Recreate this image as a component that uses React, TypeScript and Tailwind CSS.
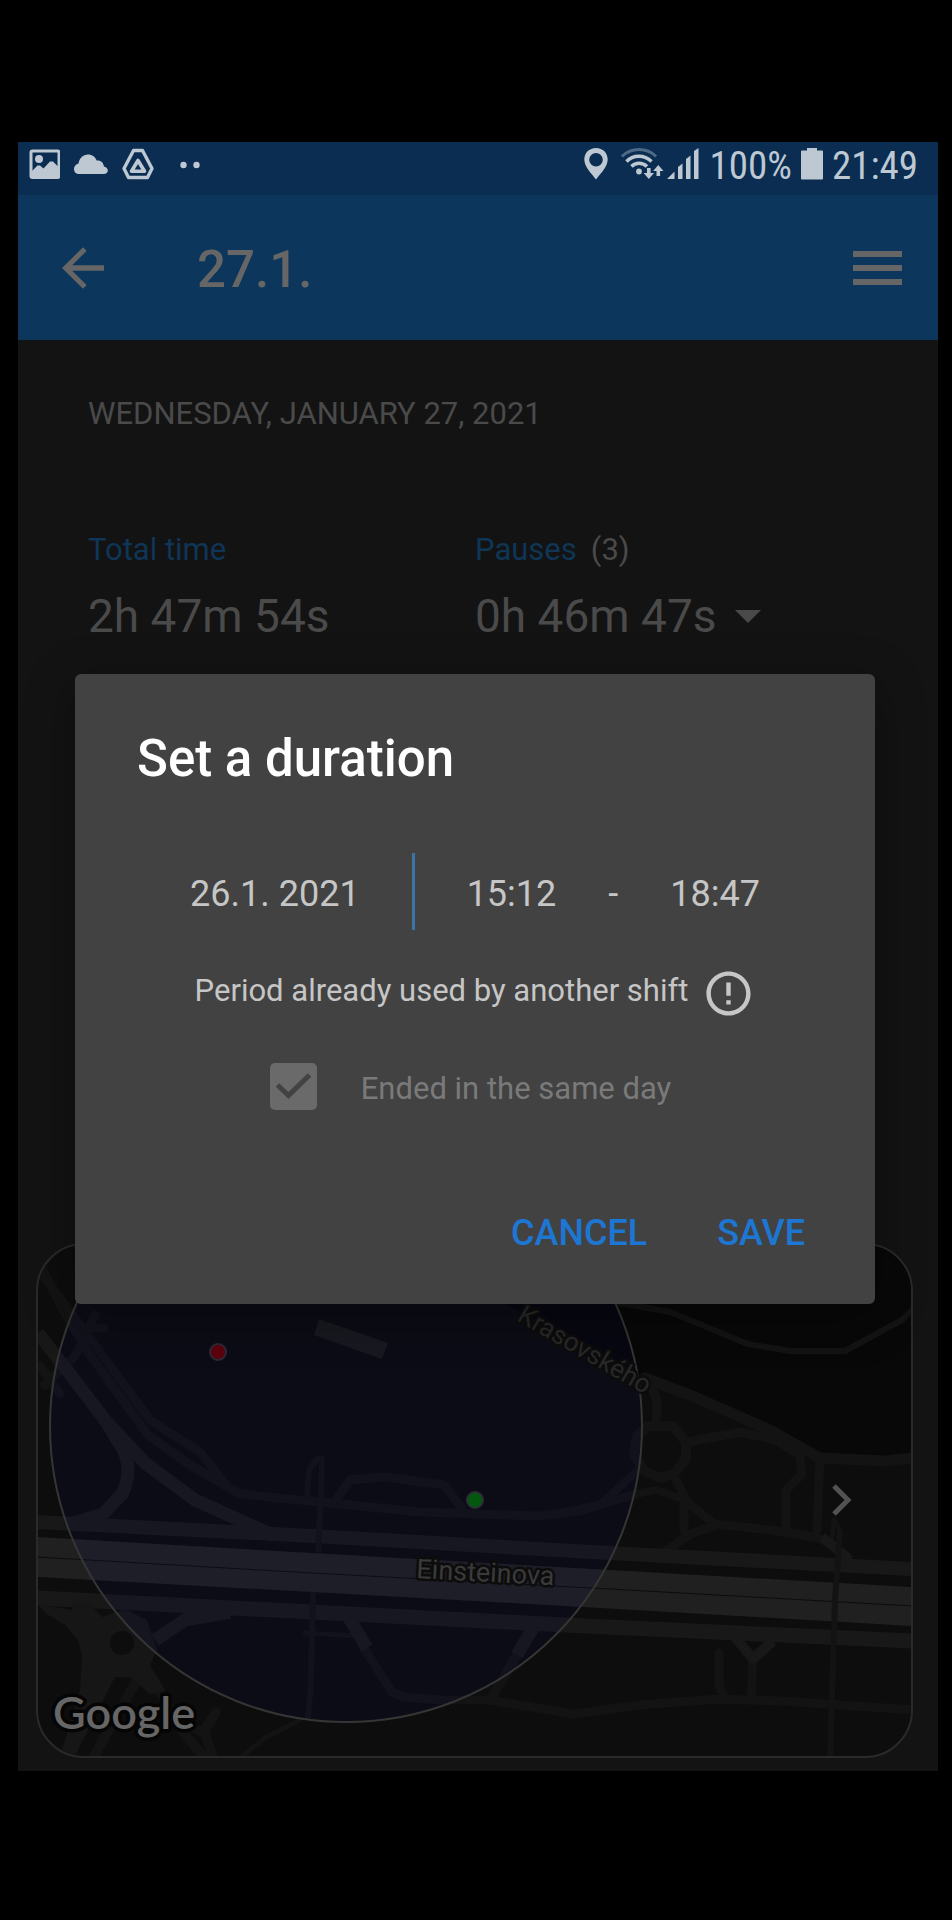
import React from "react";

function StatusBar() {
  return (
    <div className="flex h-[53px] items-start justify-between bg-[#0a2d51] pl-[10px] pr-[20px] pt-[2px] text-[#bdc8d3]">
      <div className="flex h-10 items-center gap-[14px]" aria-hidden="true">
        <svg className="h-8 w-8" viewBox="0 0 32 32" fill="none">
          <rect x="3" y="3" width="28" height="26.500" rx="1.500" stroke="currentColor" strokeWidth="3" />
          <circle cx="11" cy="11" r="4" fill="currentColor" />
          <path d="M3 24 9.500 17.500 12 17.500 15.500 20.500 22 13.500 25 13.500 30 18.500V29H3Z" fill="currentColor" />
        </svg>
        <svg className="h-8 w-[34px]" viewBox="0 0 34 32">
          <path
            d="M5.500 26C2 26 0 24 0 21 0 18 2 16.200 4.500 15.500 5.500 10 9 6.500 14 6.500c4 0 7.300 2.300 8.700 6 4-.5 7 2.200 7.200 6 2.400.6 3.900 2 3.900 4 0 2-1.600 3.500-4 3.500Z"
            fill="currentColor"
          />
        </svg>
        <svg className="h-8 w-8" viewBox="0 0 32 32" fill="none" stroke="currentColor" strokeLinejoin="round">
          <path d="M11.500 2.500h9L30 20.500 25.500 29.500H6.500L2 20.500Z" strokeWidth="3.400" />
          <path d="M16 12.500 22.500 23.300H9.500Z" strokeWidth="3.600" />
        </svg>
        <svg className="ml-3 h-8 w-5" viewBox="0 0 20 32" fill="currentColor">
          <circle cx="3.500" cy="17" r="3.200" />
          <circle cx="16.500" cy="17" r="3.200" />
        </svg>
      </div>
      <div className="flex h-10 items-center">
        <svg className="mr-3 h-8 w-6" viewBox="0 0 24 32" aria-hidden="true">
          <path
            fillRule="evenodd"
            d="M12 0C5 0 .3 5 .3 11.500.3 18.500 7 25 12 31.500 17 25 23.700 18.500 23.700 11.500 23.700 5 19 0 12 0Zm0 5a6.800 6.800 0 1 1 0 13.600A6.800 6.800 0 0 1 12 5Z"
            fill="currentColor"
          />
        </svg>
        <svg className="mr-[3px] h-8 w-[44px]" viewBox="0 0 44 32" fill="none" aria-hidden="true">
          <path d="M2 8.500C11-.8 27-.8 36 8.500" stroke="#4d6a86" strokeWidth="3" />
          <path d="M6.500 13.500c6.500-7 18-7 25 0" stroke="currentColor" strokeWidth="3.400" />
          <path d="M11.500 18.500c4-4.300 11-4.300 15.500 0" stroke="currentColor" strokeWidth="3.400" />
          <circle cx="19" cy="23.500" r="2.900" fill="currentColor" />
          <path d="M27 20h3.600v5h3.400l-5.200 6-5.200-6H27ZM36.500 28h3.600v-5h3.400l-5.200-6-5.200 6h3.400Z" fill="currentColor" />
        </svg>
        <svg className="mr-[10px] h-8 w-8" viewBox="0 0 32 32" fill="currentColor" aria-hidden="true">
          <path d="M0 31 7.500 23.500V31ZM11 19l4.500-3.500V31H11ZM19 11l4.500-3.500V31H19ZM27 3l4.500-3V31H27Z" />
        </svg>
        <span className="pt-1 font-['Roboto_Condensed','Roboto',sans-serif] text-[39px] leading-10">100%</span>
        <svg className="mx-[9px] h-8 w-[22px]" viewBox="0 0 22 32" fill="currentColor" aria-hidden="true">
          <path d="M6 0h10v2.500h5q1 0 1 1V30.500q0 1-1 1H1q-1 0-1-1V3.500q0-1 1-1H6Z" />
        </svg>
        <span className="pt-1 font-['Roboto_Condensed','Roboto',sans-serif] text-[39px] leading-10">21:49</span>
      </div>
    </div>
  );
}

function AppBar() {
  return (
    <header className="flex h-[145px] items-center bg-[#0d365c] pl-[44px] pr-[36px] text-[#666666]">
      <button type="button" aria-label="Back">
        <svg className="h-[42px] w-[42px]" viewBox="0 0 42 42" fill="currentColor">
          <path d="M42 18.300H10.200L24.600 3.900 21 .3 0 21 21 41.700 24.600 38.100 10.200 23.700H42Z" />
        </svg>
      </button>
      <h1 className="ml-[93px] grow pt-1 text-[51px] font-medium leading-[60px]">27.1.</h1>
      <button type="button" aria-label="Menu">
        <svg className="h-[34px] w-[49px]" viewBox="0 0 49 34" fill="currentColor">
          <path d="M0 0h49v6H0ZM0 14h49v6H0ZM0 28h49v6H0Z" />
        </svg>
      </button>
    </header>
  );
}

function LocationMap() {
  return (
    <section className="relative ml-[18px] mr-[25px] h-[515px] overflow-hidden rounded-[48px] border-2 border-[#2a2a2a] bg-[#0d0d0d]">
      <svg
        className="h-full w-full"
        viewBox="38 1245 873 511"
        preserveAspectRatio="xMidYMid slice"
        fill="none"
        strokeLinejoin="round"
        role="img"
        aria-label="Map of the shift location"
      >
        <path d="M480 1243V1290L645 1378 770 1430 820 1458H913V1243Z" fill="#080808" />
        <g stroke="#131313" strokeWidth="9" strokeLinecap="round">
          <path d="M38 1260 62 1308 88 1352 148 1435 190 1465 240 1494 330 1503 420 1512 540 1516 580 1511 636 1494" />
          <path d="M40 1272 78 1322 150 1420 200 1452 228 1487" />
          <path d="M95 1315 88 1330 75 1356 45 1385M88 1328 104 1328M40 1366 60 1394" />
          <path d="M336 1500 350 1480 385 1477 444 1485 462 1508" />
          <path d="M307 1494 309 1470 317 1459 322 1459 321 1495" strokeWidth="6" />
          <path d="M620 1303 670 1312 748 1344 790 1351 845 1351 902 1320 913 1309" strokeWidth="6" />
          <path d="M645 1378 690 1395 770 1430 820 1458 885 1461 913 1458" strokeWidth="11" />
          <path d="M650 1385Q660 1400 656 1418" />
          <path d="M648 1426 673 1426 686 1442 686 1458 675 1473 660 1478 645 1471 634 1455 637 1436Z" strokeWidth="10" />
          <path d="M688 1442 740 1432 775 1440 800 1455 802 1474 786 1490 786 1528" />
          <path d="M820 1460 817 1530M676 1480 688 1503 715 1524 770 1530 818 1538 835 1546" />
          <path d="M684 1503V1530M717 1525 690 1534 662 1554" />
          <path d="M636 1494 656 1490 680 1498M540 1516 600 1505 638 1470" strokeWidth="8" />
          <path d="M831 1546 834 1520 841 1533" strokeWidth="5" />
          <path d="M363 1647 392 1692 404 1697 440 1700 490 1700 574 1714 640 1705 718 1699 780 1701 913 1710" />
          <path d="M719 1653V1685L725 1700M753 1655 751 1700" />
          <path d="M519 1652 490 1700" strokeWidth="10" />
          <path d="M305 1633 358 1636M300 1720 265 1738 240 1758" strokeWidth="5" />
          <path d="M170 1718 205 1733 213 1758M216 1712 206 1728M150 1675 185 1735 205 1758M137 1680 93 1758" strokeWidth="10" />
        </g>
        <g stroke="#181818">
          <path d="M38 1333 70 1374 105 1420 145 1463 195 1500 275 1536" strokeWidth="13" />
          <path d="M105 1420 122 1448Q134 1470 122 1494L103 1514 70 1524" strokeWidth="13" />
          <path d="M37 1522 312 1536 610 1553 913 1569" strokeWidth="14" />
          <path d="M37 1598 312 1612 565 1625 913 1641" strokeWidth="15" />
          <path d="M822 1537 850 1560M735 1637 753 1659 773 1641" strokeWidth="10" />
          <path d="M349 1618 367 1648M533 1628 517 1655" strokeWidth="13" />
          <path d="M155 1640 185 1620 230 1612" strokeWidth="13" />
        </g>
        <path
          d="M38 1604 72 1610 75 1600 90 1604 102 1617 125 1609 147 1620 157 1650 150 1665 165 1690 150 1695 133 1678 115 1677 75 1756 62 1750 80 1690 82 1655 78 1640 65 1625 45 1613Z"
          fill="#161616"
        />
        <circle cx="122" cy="1643" r="12" fill="#0d0d0d" />
        <path d="M37 1537 312 1553 610 1570 913 1587V1626L583 1607 312 1592 37 1577Z" fill="#202020" />
        <path d="M37 1557 312 1573 610 1589 913 1606" stroke="#0d0d0d" strokeWidth="1" />
        <path d="M321 1495 318 1552M313 1592 311 1680 308 1720M840 1530 835 1600 830 1758" stroke="#131313" strokeWidth="6" />
        <path d="M319 1319 388 1343 382 1359 314 1335Z" fill="#191917" />
        <circle cx="346" cy="1426" r="296" fill="#0000ff" fillOpacity="0.04" stroke="#353535" strokeWidth="2" />
        <circle cx="218" cy="1352" r="8" fill="#5b000c" stroke="#2d2a38" strokeWidth="2" />
        <circle cx="475" cy="1500" r="8" fill="#04580e" stroke="#2d2f38" strokeWidth="2" />
        <g className="font-['Roboto',sans-serif]" stroke="#0c0c0c" strokeWidth="5" paintOrder="stroke">
          <text x="516" y="1320" fontSize="26" fill="#282828" transform="rotate(30 516 1320)">
            Krasovského
          </text>
          <text x="416" y="1578" fontSize="27" fill="#3a3a3a" transform="rotate(3 416 1578)">
            Einsteinova
          </text>
        </g>
        <text
          x="53"
          y="1729"
          fontSize="45"
          className="font-['Lato',sans-serif] font-semibold"
          fill="#666666"
          stroke="#050505"
          strokeWidth="7"
          paintOrder="stroke"
        >
          Google
        </text>
        <path d="M834 1486 848 1500 834 1514" stroke="#525252" strokeWidth="5" strokeLinejoin="miter" />
      </svg>
    </section>
  );
}

function DayDetails() {
  return (
    <main className="bg-[#131313] pb-[13px] pt-[54px] text-[#4a4a4a]">
      <div className="pl-[70px] pr-[76px]">
        <p className="text-[31px] leading-10">WEDNESDAY, JANUARY 27, 2021</p>
        <div className="mt-24 grid grid-cols-2">
          <div>
            <h2 className="text-[31px] leading-10 text-[#0f3557]">Total time</h2>
            <p className="mt-4 text-[46px] leading-[60px]">2h 47m 54s</p>
          </div>
          <div>
            <h2 className="flex gap-[14px] text-[31px] leading-10">
              <span className="text-[#0f3557]">Pauses</span>
              <span>(3)</span>
            </h2>
            <button type="button" className="mt-4 flex items-center gap-[18px] text-[46px] leading-[60px]">
              0h 46m 47s
              <svg className="h-[13px] w-[26px]" viewBox="0 0 26 13" fill="currentColor" aria-hidden="true">
                <path d="M0 0H26L13 13Z" />
              </svg>
            </button>
          </div>
        </div>
      </div>
      <div className="pt-[597px]">
        <LocationMap />
      </div>
    </main>
  );
}

function DurationDialog() {
  return (
    <div className="absolute inset-0 pl-[57px] pr-[63px] pt-[532px]">
      <div
        role="dialog"
        aria-labelledby="duration-title"
        className="rounded-md bg-[#424242] pb-[47px] pt-[55px] text-[#c6c6c6] shadow-[0_12px_48px_rgba(0,0,0,0.35)]"
      >
        <h2 id="duration-title" className="pl-[62px] text-[51px] font-medium leading-[60px] text-white">
          Set a duration
        </h2>
        <div className="mt-16 flex h-[77px] items-start justify-center gap-[52px] text-[36px] leading-[82px]">
          <button type="button">26.1. 2021</button>
          <span className="h-full w-[3px] bg-[#3d74a8]" />
          <button type="button">15:12</button>
          <span>-</span>
          <button type="button">18:47</button>
        </div>
        <div className="mt-[37px] flex justify-center gap-[14px]">
          <p className="text-[31px] leading-[48px]">Period already used by another shift</p>
          <svg className="h-[53px] w-[53px]" viewBox="0 0 24 24" fill="currentColor" aria-hidden="true">
            <path d="M11 15h2v2h-2zm0-8h2v6h-2zm.99-5C6.470 2 2 6.480 2 12s4.470 10 9.990 10C17.520 22 22 17.520 22 12S17.520 2 11.990 2zM12 20c-4.420 0-8-3.580-8-8s3.580-8 8-8 8 3.580 8 8-3.580 8-8 8z" />
          </svg>
        </div>
        <label className="mt-[43px] flex justify-center gap-[44px] pr-[9px] text-[31px] leading-[52px] text-[#7a7a7a]">
          <span className="relative h-[47px] w-[47px]">
            <input
              type="checkbox"
              defaultChecked
              disabled
              className="block h-full w-full appearance-none rounded-[5px] bg-[#6a6a6a]"
            />
            <svg
              className="pointer-events-none absolute inset-0 h-full w-full"
              viewBox="0 0 47 47"
              fill="none"
              stroke="#424242"
              strokeWidth="5"
              aria-hidden="true"
            >
              <path d="M7.500 22 18.500 32.500 39.500 12" />
            </svg>
          </span>
          Ended in the same day
        </label>
        <div className="mt-[94px] flex justify-end gap-[38px] pr-[54px] text-[36px] font-medium leading-[48px] text-[#1c76d2]">
          <button type="button" className="px-4">
            CANCEL
          </button>
          <button type="button" className="px-4">
            SAVE
          </button>
        </div>
      </div>
    </div>
  );
}

export default function App() {
  return (
    <div className="min-h-screen bg-black pb-[149px] pl-[18px] pr-[14px] pt-[142px] font-['Roboto',sans-serif]">
      <div className="relative">
        <StatusBar />
        <AppBar />
        <DayDetails />
        <DurationDialog />
      </div>
    </div>
  );
}
